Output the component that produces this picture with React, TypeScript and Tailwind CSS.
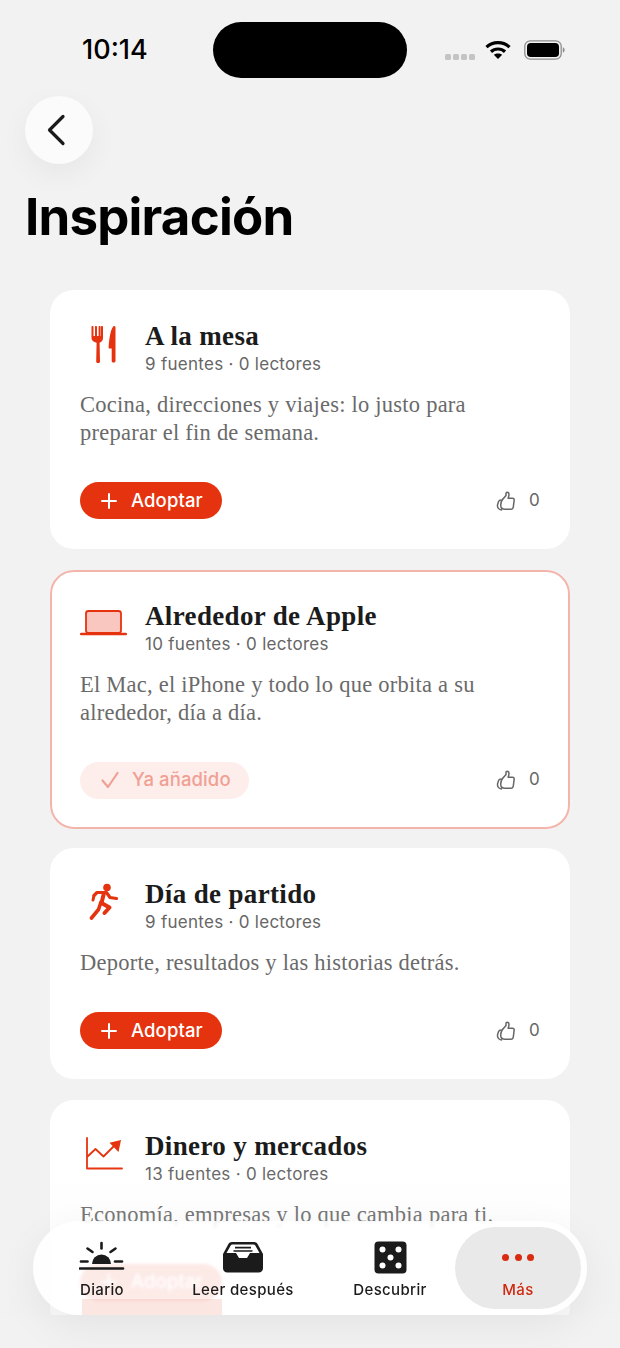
import React from "react";

const RED = "#e6330f";

function Fork() {
  return (
    <svg width="26" height="40" viewBox="0 0 26 40" fill={RED}>
      <path d="M1.500 2c.6 0 1 .4 1 1v9h1.500V3c0-.6.4-1 1-1s1 .4 1 1v9h1.600V3c0-.6.4-1 1-1s1 .4 1 1v9H10V3c0-.6.4-1 1-1s1 .4 1 1v11c0 2.400-1.400 4-3.400 4.800l.4 18.700c0 1-.8 1.500-1.900 1.500s-1.900-.5-1.900-1.500l.4-18.700C2.400 18 .5 16.400.5 14V3c0-.6.4-1 1-1z" />
      <path d="M23 2c.9 0 1.500.6 1.500 1.500V37c0 1-.8 1.500-1.900 1.500s-1.900-.5-1.900-1.500V24.500h-2.200c-.6 0-1-.4-.9-1 .4-7 1.600-17 4.400-20.800.2-.4.600-.7 1-.7z" />
    </svg>
  );
}

function Laptop() {
  return (
    <svg width="47" height="28" viewBox="0 0 47 28" fill="none">
      <rect x="6" y="2" width="35" height="22" rx="2.500" fill="#f9c6c0" stroke={RED} strokeWidth="1.800" />
      <path d="M1.200 25h44.600" stroke={RED} strokeWidth="2.600" strokeLinecap="round" />
    </svg>
  );
}

function Runner() {
  return (
    <svg width="30" height="38" viewBox="0 0 30 38" fill="none">
      <circle cx="18" cy="4.500" r="3.800" fill={RED} />
      <path d="M5 12.500 L8 9.500 L17.500 9.500 L21 14.500 L27.500 15.500" stroke={RED} strokeWidth="3.200" strokeLinecap="round" strokeLinejoin="round" />
      <path d="M15 10 L12.500 20 L20.500 24.500 L15.500 30" stroke={RED} strokeWidth="4" strokeLinecap="round" strokeLinejoin="round" />
      <path d="M12 19 L9.500 26.500 L2.500 35" stroke={RED} strokeWidth="3.600" strokeLinecap="round" strokeLinejoin="round" />
      <path d="M5 12.500 L4 17" stroke={RED} strokeWidth="3" strokeLinecap="round" />
    </svg>
  );
}

function Chart() {
  return (
    <svg width="38" height="33" viewBox="0 0 38 33" fill="none">
      <path d="M2 1v30.500h35" stroke={RED} strokeWidth="1.800" strokeLinecap="round" strokeLinejoin="round" />
      <path d="M2 20l8.500-8 8 7.500L30 8" stroke={RED} strokeWidth="1.800" strokeLinejoin="round" />
      <path d="M24.500 5.800 L36 3 L33.500 15 Z" fill={RED} />
    </svg>
  );
}

function Thumb() {
  return (
    <svg width="20" height="20" viewBox="0 0 20 20" fill="none" stroke="#666" strokeWidth="1.500" strokeLinejoin="round" strokeLinecap="round">
      <path d="M6.500 8.500 10 4.500V2.300c0-.7.500-1.100 1.100-1.100 1.100 0 1.900 1 1.900 2.300 0 1.300-.5 2.700-.9 3.700h4.400c1 0 1.700.7 1.700 1.600l-.9 7.200c-.2 1.300-1.100 2.200-2.400 2.200H8.500c-1.100 0-2-.6-2.700-1.100" />
      <path d="M5 9c-1.300.1-2 .6-2.500 1.600L1.500 14c-.3 2.500 1.300 4.800 4 4.900" />
      <path d="M6.500 8.500c-1 1.400-1.800 3.500-1.800 5.500 0 1.500.4 3 1.100 4" />
    </svg>
  );
}

function Sun() {
  return (
    <svg width="46" height="32" viewBox="0 0 46 32" fill="#1b1b1b">
      <path d="M13 23a9.500 9.500 0 0 1 19 0z" />
      <path d="M1 27.500h43" stroke="#1b1b1b" strokeWidth="2.600" strokeLinecap="round" />
      <g stroke="#1b1b1b" strokeWidth="2.600" strokeLinecap="round">
        <path d="M22.500 2v5.500" />
        <path d="M8.500 7.500l5 3.500" />
        <path d="M36.500 7.500l-5 3.500" />
        <path d="M2 20.500h6.500" />
        <path d="M36 20.500h7" />
      </g>
    </svg>
  );
}

function Tray() {
  return (
    <svg width="42" height="32" viewBox="0 0 42 32">
      <path d="M10 1h22c1.700 0 2.900.8 3.700 2.200L41 13v14c0 2.800-1.700 4.500-4.500 4.500h-31C2.700 31.500 1 29.800 1 27V13L6.300 3.200C7.100 1.800 8.300 1 10 1z" fill="#1b1b1b" />
      <path d="M10.500 3.500h21c.8 0 1.400.3 1.800 1L37.500 12H28l-3 5h-8l-3-5H4.500l4.200-7.500c.4-.7 1-1 1.800-1z" fill="#fff" />
      <path d="M13 6.700h16M11.500 10h19" stroke="#1b1b1b" strokeWidth="1.700" />
    </svg>
  );
}

function Dice() {
  return (
    <svg width="33" height="33" viewBox="0 0 33 33">
      <rect x="0.500" y="0.500" width="32" height="32" rx="4" fill="#1b1b1b" />
      <g fill="#fff">
        <circle cx="8.500" cy="8.500" r="3" />
        <circle cx="24.500" cy="8.500" r="3" />
        <circle cx="16.500" cy="16.500" r="3" />
        <circle cx="8.500" cy="24.500" r="3" />
        <circle cx="24.500" cy="24.500" r="3" />
      </g>
    </svg>
  );
}

function Card({
  icon,
  title,
  sub,
  desc,
  added,
}: {
  icon: React.ReactNode;
  title: string;
  sub: string;
  desc: string[];
  added?: boolean;
}) {
  return (
    <div
      className={`shrink-0 rounded-[24px] bg-white px-[30px] pt-[30px] pb-[30px] ${
        added ? "outline-2 outline-[#f3b5ab] -outline-offset-2 -mb-px" : ""
      }`}
    >
      <div className="flex items-center">
        <div className="flex h-[55px] w-[47px] items-center justify-center mr-[18px] pb-[8px]">{icon}</div>
        <div>
          <div className="font-['Liberation_Serif',serif] font-bold text-[27px] leading-[32px] text-[#1b1b1b] tracking-[0.35px]">
            {title}
          </div>
          <div className="mt-[1px] text-[17px] leading-[22px] text-[#666] tracking-[0.28px]">{sub}</div>
        </div>
      </div>
      <div className="mt-[16px] font-['Liberation_Serif',serif] text-[22.500px] leading-[28px] text-[#6a6a6a] tracking-[0.24px]">
        {desc.map((d) => (
          <div key={d}>{d}</div>
        ))}
      </div>
      <div className="mt-[35px] flex items-center justify-between">
        {added ? (
          <div className="flex h-[37px] w-[169px] items-center rounded-full bg-[#fdeeeb] pl-[21px] text-[#f0a094]">
            <svg width="18" height="18" viewBox="0 0 18 18" fill="none" stroke="#f0a094" strokeWidth="2.200" strokeLinecap="round" strokeLinejoin="round">
              <path d="M1.500 9.500 7 16 16.500 2" />
            </svg>
            <span className="ml-[13px] text-[18.500px] font-medium tracking-[0.1px]">Ya añadido</span>
          </div>
        ) : (
          <div className="flex h-[37px] w-[142px] items-center rounded-full bg-[#e6330f] pl-[21px] text-white">
            <svg width="16" height="16" viewBox="0 0 16 16" fill="none" stroke="#fff" strokeWidth="2" strokeLinecap="round">
              <path d="M8 1v14M1 8h14" />
            </svg>
            <span className="ml-[14px] text-[18.500px] font-medium tracking-[0.1px]">Adoptar</span>
          </div>
        )}
        <div className="flex items-center">
          <Thumb />
          <span className="ml-[13px] w-[11px] text-[17px] text-[#666]">0</span>
        </div>
      </div>
    </div>
  );
}

function NavItem({
  icon,
  label,
  className,
  labelClass,
}: {
  icon: React.ReactNode;
  label: string;
  className: string;
  labelClass?: string;
}) {
  return (
    <div className={`flex h-[82px] flex-col items-center ${className}`}>
      <div className="mt-[12px] flex h-[36px] items-center justify-center">{icon}</div>
      <div className={`mt-[5px] text-[15px] leading-[20px] font-medium tracking-[0.35px] ${labelClass ?? "text-[#1b1b1b]"}`}>
        {label}
      </div>
    </div>
  );
}

export default function App() {
  return (
    <div className="relative h-[1348px] w-[620px] overflow-hidden bg-[#f2f2f2] font-['Inter',sans-serif]">
      <div className="h-[1315px] overflow-hidden">
        <div className="flex pt-[22px]">
          <div className="h-[56px] w-[213px] pl-[82px] text-[27px] leading-[56px] font-medium text-black">10:14</div>
          <div className="h-[56px] w-[194px] rounded-full bg-black" />
          <div className="flex h-[56px] items-center pl-[38px]">
            <div className="mt-[13px] flex gap-[2px]">
              <div className="h-[6px] w-[6px] rounded-[1.500px] bg-[#c4c4c4]" />
              <div className="h-[6px] w-[6px] rounded-[1.500px] bg-[#c4c4c4]" />
              <div className="h-[6px] w-[6px] rounded-[1.500px] bg-[#c4c4c4]" />
              <div className="h-[6px] w-[6px] rounded-[1.500px] bg-[#c4c4c4]" />
            </div>
            <svg className="ml-[10px] -mt-[1px]" width="26" height="20" viewBox="0 0 26 20" fill="none" stroke="#000" strokeWidth="3.200">
              <path d="M1.500 7.200C7.800 1.200 18.200 1.200 24.500 7.200" />
              <path d="M6 11.700c3.900-3.600 10.100-3.600 14 0" />
              <path d="M13 19l-4.200-4.200c2.400-1.800 6-1.800 8.400 0z" fill="#000" stroke="none" />
            </svg>
            <svg className="ml-[13px]" width="41" height="20" viewBox="0 0 41 20" fill="none">
              <rect x="0.800" y="0.800" width="36.400" height="18.400" rx="5.500" stroke="#8d8d8d" strokeWidth="1.300" />
              <rect x="3" y="3" width="32" height="14" rx="3.800" fill="#000" />
              <path d="M38.800 7.200c1.200.4 1.800 1.500 1.800 2.800s-.6 2.400-1.800 2.800z" fill="#8d8d8d" />
            </svg>
          </div>
        </div>

        <div className="mt-[18px] ml-[25px] flex h-[68px] w-[68px] items-center justify-center rounded-full bg-[#fbfbfb] shadow-[0_10px_30px_rgba(0,0,0,0.05)]">
          <svg width="20" height="32" viewBox="0 0 20 32" fill="none" stroke="#1b1b1b" strokeWidth="3.200" strokeLinecap="round" strokeLinejoin="round" className="-ml-[7px]">
            <path d="M17 2.500 3.500 16 17 29.500" />
          </svg>
        </div>

        <div className="mt-[22px] ml-[25px] text-[51px] leading-[62px] font-bold tracking-[-0.8px] text-black">Inspiración</div>

        <div className="mt-[42px] flex flex-col gap-[20.500px] px-[50px]">
          <Card
            icon={<Fork />}
            title="A la mesa"
            sub="9 fuentes · 0 lectores"
            desc={["Cocina, direcciones y viajes: lo justo para", "preparar el fin de semana."]}
          />
          <Card
            added
            icon={<Laptop />}
            title="Alrededor de Apple"
            sub="10 fuentes · 0 lectores"
            desc={["El Mac, el iPhone y todo lo que orbita a su", "alrededor, día a día."]}
          />
          <Card
            icon={<Runner />}
            title="Día de partido"
            sub="9 fuentes · 0 lectores"
            desc={["Deporte, resultados y las historias detrás."]}
          />
          <Card
            icon={<Chart />}
            title="Dinero y mercados"
            sub="13 fuentes · 0 lectores"
            desc={["Economía, empresas y lo que cambia para ti."]}
          />
        </div>
      </div>

      <div className="absolute inset-x-0 top-[1160px] h-[155px] bg-gradient-to-b from-transparent to-[#f0f0f0]/30" />
      <div className="absolute left-[33px] top-[1221px] flex h-[94px] w-[554px] items-center overflow-hidden rounded-[47px] bg-white/[0.87] pl-[6px] shadow-[0_12px_40px_rgba(0,0,0,0.06)] backdrop-blur-[1.5px]">
        <div className="absolute left-[49px] top-[78px] h-[16px] w-[140px] bg-[#e6330f]/12" />
        <NavItem className="relative w-[126px]" icon={<Sun />} label="Diario" />
        <NavItem className="relative w-[156px]" icon={<Tray />} label="Leer después" />
        <NavItem className="ml-[2px] w-[134px]" icon={<Dice />} label="Descubrir" />
        <NavItem
          className="-ml-[2px] w-[126px] rounded-[41px] bg-[#e9e9e9]"
          labelClass="text-[#cf2a10]"
          label="Más"
          icon={
            <div className="flex gap-[5.700px]">
              <div className="h-[7px] w-[7px] rounded-full bg-[#d92b10]" />
              <div className="h-[7px] w-[7px] rounded-full bg-[#d92b10]" />
              <div className="h-[7px] w-[7px] rounded-full bg-[#d92b10]" />
            </div>
          }
        />
      </div>
    </div>
  );
}
